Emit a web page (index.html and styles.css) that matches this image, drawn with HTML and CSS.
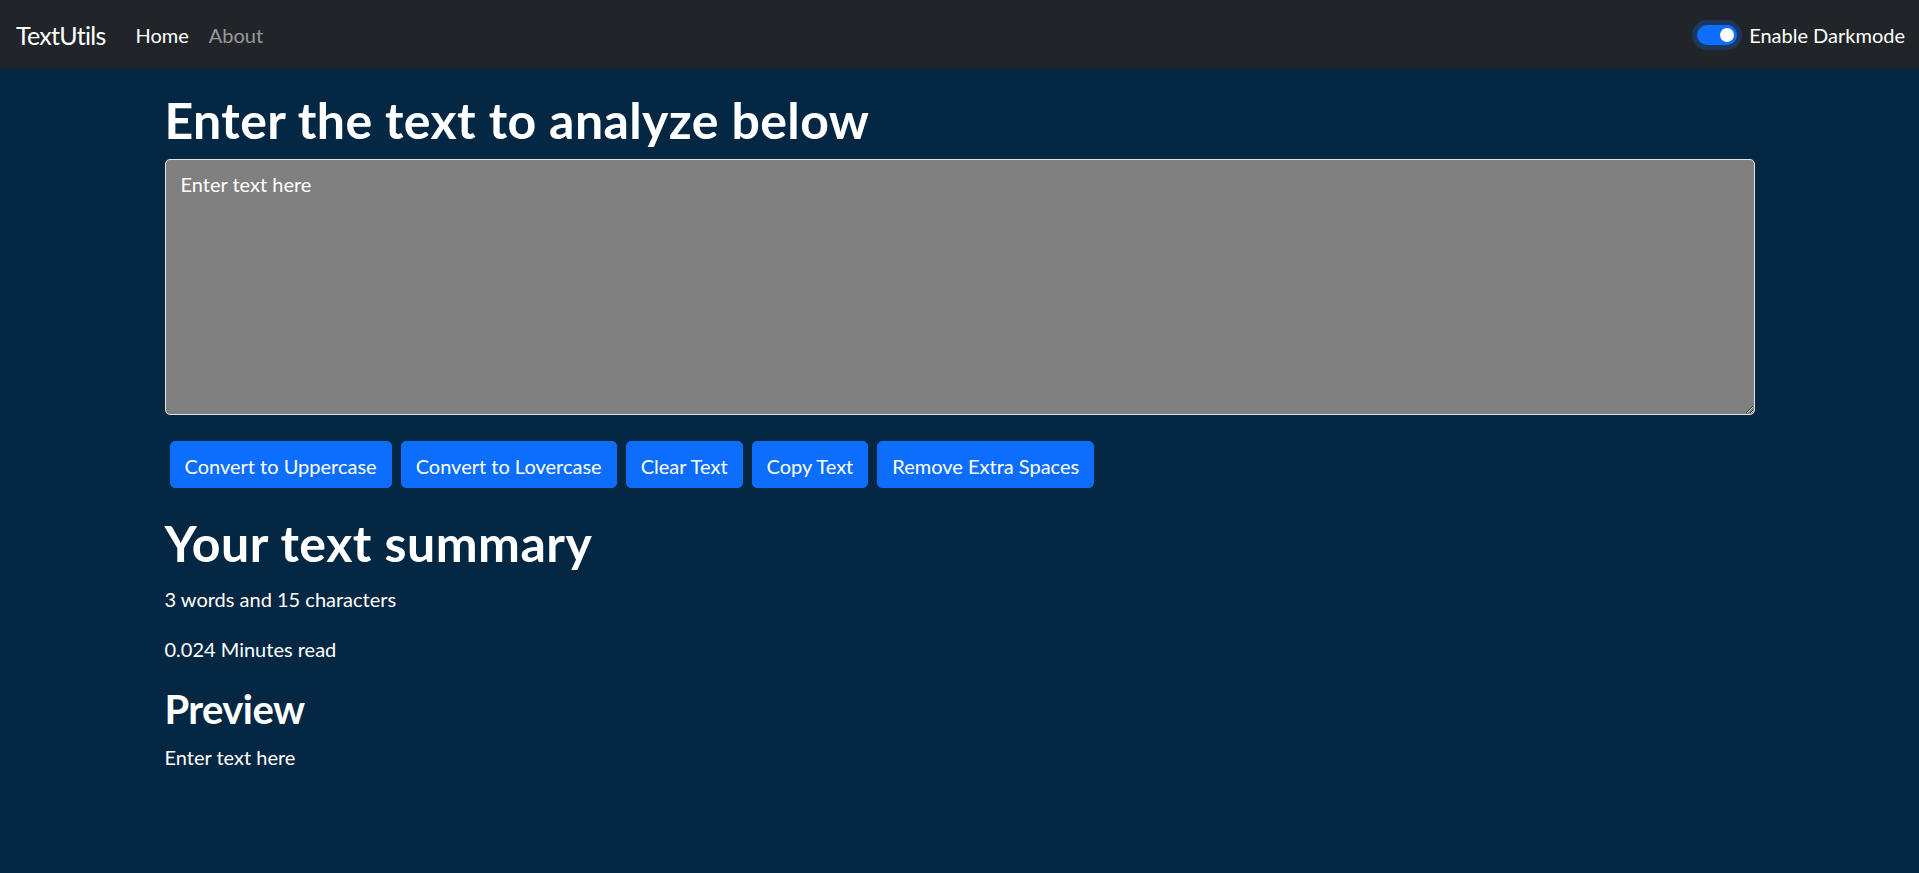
FILE: index.html
```html
<!DOCTYPE html>
<html lang="en">
<head>
<meta charset="utf-8">
<title>TextUtils</title>
<link rel="stylesheet" href="styles.css">
</head>
<body>
<nav class="navbar">
  <div class="nav-left">
    <a class="brand" href="#">TextUtils</a>
    <ul class="nav-links">
      <li><a class="nav-link active" href="#">Home</a></li>
      <li><a class="nav-link" href="#">About</a></li>
    </ul>
  </div>
  <div class="switch">
    <span class="toggle"><span class="knob"></span></span>
    <label class="switch-label">Enable Darkmode</label>
  </div>
</nav>
<main class="container main">
  <h1 class="title title-top">Enter the text to analyze below</h1>
  <textarea class="text-box" rows="8">Enter text here</textarea>
  <div class="buttons">
    <button class="btn">Convert to Uppercase</button>
    <button class="btn">Convert to Lovercase</button>
    <button class="btn">Clear Text</button>
    <button class="btn">Copy Text</button>
    <button class="btn">Remove Extra Spaces</button>
  </div>
</main>
<section class="container summary">
  <h1 class="title title-summary">Your text summary</h1>
  <p class="para">3 words and 15 characters</p>
  <p class="para">0.024 Minutes read</p>
  <h2 class="subtitle">Preview</h2>
  <p class="para">Enter text here</p>
</section>
</body>
</html>
```
FILE: styles.css
```css
* { box-sizing: border-box; }
html, body { height: 100%; }
body {
  margin: 0;
  background: #042743;
  color: #ffffff;
  font-family: Lato, "Noto Sans", sans-serif;
  font-size: 20px;
  line-height: 30px;
}
.navbar {
  background: #212529;
  height: 69px;
  padding: 0 14px 0 16px;
  display: flex;
  align-items: center;
  justify-content: space-between;
}
.nav-left { display: flex; align-items: center; }
.brand {
  color: #fff;
  text-decoration: none;
  font-size: 25px;
  line-height: 38px;
  letter-spacing: -0.7px;
  margin-right: 20px;
}
.nav-links { list-style: none; margin: 0; padding: 0; display: flex; }
.nav-link {
  display: block;
  padding: 0 10px;
  text-decoration: none;
  color: rgba(255,255,255,0.55);
  font-size: 20px;
  line-height: 30px;
}
.nav-link.active { color: #fff; }
.switch { display: flex; align-items: center; }
.toggle {
  position: relative;
  width: 40px;
  height: 20px;
  border-radius: 10px;
  background: #0d6efd;
  box-shadow: 0 0 0 5px rgba(13,110,253,0.25);
  margin-right: 12px;
}
.knob {
  position: absolute;
  right: 3px;
  top: 3px;
  width: 14px;
  height: 14px;
  border-radius: 50%;
  background: #fff;
}
.switch-label { font-size: 20px; line-height: 30px; }
.container {
  width: 1590px;
  margin: 20px auto;
}
.main { margin-top: 21px; }
.title {
  font-size: 50px;
  line-height: 60px;
  font-weight: 700;
  margin: 0;
}
.title-top { margin-bottom: 9px; letter-spacing: 0.4px; }
.title-summary { margin-bottom: 11px; letter-spacing: 0.5px; }
.subtitle {
  font-size: 40px;
  line-height: 48px;
  font-weight: 700;
  letter-spacing: -0.6px;
  margin: 0 0 10px;
  position: relative;
  top: 1px;
}
.text-box {
  display: block;
  width: 100%;
  height: 256px;
  background: #808080;
  color: #fff;
  border: 1px solid #dee2e6;
  border-radius: 5px;
  padding: 9px 15px;
  font-family: inherit;
  font-size: 20px;
  line-height: 30px;
  margin-bottom: 21px;
}
.buttons { display: flex; flex-wrap: wrap; }
.btn {
  background: #0d6efd;
  color: #fff;
  border: 1px solid #0d6efd;
  border-radius: 5px;
  padding: 8.5px 14px 6.5px;
  font-family: inherit;
  font-size: 20px;
  line-height: 30px;
  margin: 5px 4.5px;
}
.btn:first-child { margin-left: 5px; }
.para { margin: 0 0 20px; }
```
